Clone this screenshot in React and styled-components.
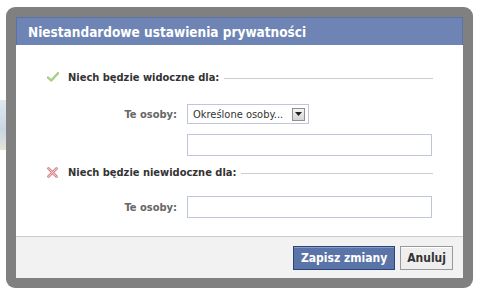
import React from "react";
import styled, { createGlobalStyle } from "styled-components";

const Global = createGlobalStyle`
  html, body { margin: 0; padding: 0; background: #fff; }
  body { font-family: "DejaVu Sans Condensed", "DejaVu Sans", sans-serif; }
  * { box-sizing: border-box; }
`;

const Page = styled.div`
  position: relative;
  width: 480px;
  height: 295px;
  overflow: hidden;
  background: #fff;
  padding: 7px 7px 0 6px;
`;

const LeftStrip = styled.div`
  position: absolute;
  left: 0;
  top: 100px;
  width: 6px;
  height: 50px;
  background: linear-gradient(#dfe8f0, #c9d6e2 60%, #e8e2d8);
`;

const Frame = styled.div`
  width: 467px;
  height: 281px;
  background: #808080;
  border-radius: 9px;
  padding: 10px;
`;

const Dialog = styled.div`
  height: 100%;
  display: flex;
  flex-direction: column;
  background: #fff;
`;

const TitleBar = styled.div`
  height: 28px;
  background: #6d84b4;
  border: 1px solid #5a72a6;
  border-bottom: none;
  color: #fff;
  font-weight: bold;
  font-size: 13.5px;
  display: flex;
  align-items: center;
  padding-left: 11px;
`;

const Body = styled.div`
  flex: 1;
  padding: 25px 30px 0 30px;
  display: flex;
  flex-direction: column;
`;

const SectionHead = styled.div`
  display: flex;
  align-items: center;
  height: 14px;
  margin-top: ${(p) => p.$top || 0}px;
`;

const IconBox = styled.span`
  width: 22px;
  display: flex;
  align-items: center;
  padding-left: 1px;
`;

const HeadLabel = styled.span`
  font-size: 11px;
  font-weight: bold;
  color: #333;
  white-space: nowrap;
  margin-right: 5px;
`;

const Rule = styled.div`
  flex: 1;
  height: 1px;
  background: #ccc;
  margin-top: 2px;
`;

const FieldRow = styled.div`
  display: flex;
  align-items: center;
  margin-top: ${(p) => p.$top || 0}px;
`;

const FieldLabel = styled.span`
  width: 141px;
  text-align: right;
  padding-right: 10px;
  font-size: 11px;
  font-weight: bold;
  color: #666;
`;

const Spacer = styled.span`
  width: 141px;
`;

const Select = styled.div`
  width: 122px;
  height: 20px;
  border: 1px solid #bdc7d8;
  display: flex;
  align-items: center;
  justify-content: space-between;
  padding: 0 3px 0 5px;
  font-size: 11px;
  color: #333;
`;

const Arrow = styled.span`
  width: 13px;
  height: 13px;
  background: linear-gradient(#f4f4f4, #d4d4d4);
  border: 1px solid #8f8f8f;
  display: flex;
  align-items: center;
  justify-content: center;
`;

const Input = styled.div`
  width: 245px;
  height: 22px;
  border: 1px solid #bdc7d8;
  background: #fff;
`;

const Footer = styled.div`
  height: 42px;
  background: #f2f2f2;
  border-top: 1px solid #ccc;
  display: flex;
  align-items: center;
  justify-content: flex-end;
  gap: 5px;
  padding: 1px 10px 0 0;
`;

const Button = styled.div`
  height: 24px;
  display: flex;
  align-items: center;
  padding: 0 ${(p) => (p.$primary ? 7 : 6)}px;
  font-size: 12px;
  font-weight: bold;
  color: ${(p) => (p.$primary ? "#fff" : "#333")};
  background: ${(p) => (p.$primary ? "#5b74a8" : "#eeeeee")};
  border: 1px solid ${(p) => (p.$primary ? "#29447e" : "#999")};
  box-shadow: inset 0 1px 0 ${(p) => (p.$primary ? "#8a9cc2" : "#fff")};
`;

const Check = () => (
  <svg width="12" height="10" viewBox="0 0 12 10">
    <path d="M1 5.5 L4.2 8.5 L11 1.2" fill="none" stroke="#8cc26a" strokeWidth="2.2" strokeLinecap="round" strokeLinejoin="round" />
    <path d="M1 5.5 L4.2 8.5 L11 1.2" fill="none" stroke="#cfe9b8" strokeWidth="0.8" strokeLinecap="round" strokeLinejoin="round" />
  </svg>
);

const Cross = () => (
  <svg width="11" height="11" viewBox="0 0 11 11">
    <path d="M1.5 1.5 L9.5 9.5 M9.5 1.5 L1.5 9.5" fill="none" stroke="#d98b8f" strokeWidth="2.8" strokeLinecap="round" />
    <path d="M1.5 1.5 L9.5 9.5 M9.5 1.5 L1.5 9.5" fill="none" stroke="#f4d2d4" strokeWidth="0.9" strokeLinecap="round" />
  </svg>
);

const DownTri = () => (
  <svg width="7" height="4" viewBox="0 0 7 4">
    <path d="M0 0 H7 L3.5 4 Z" fill="#222" />
  </svg>
);

export default function App() {
  return (
    <>
      <Global />
      <Page>
        <LeftStrip />
        <Frame>
          <Dialog>
            <TitleBar>Niestandardowe ustawienia prywatności</TitleBar>
            <Body>
              <SectionHead>
                <IconBox><Check /></IconBox>
                <HeadLabel>Niech będzie widoczne dla:</HeadLabel>
                <Rule />
              </SectionHead>
              <FieldRow $top={20}>
                <FieldLabel>Te osoby:</FieldLabel>
                <Select>
                  <span>Określone osoby...</span>
                  <Arrow><DownTri /></Arrow>
                </Select>
              </FieldRow>
              <FieldRow $top={10}>
                <Spacer />
                <Input />
              </FieldRow>
              <SectionHead $top={9}>
                <IconBox><Cross /></IconBox>
                <HeadLabel>Niech będzie niewidoczne dla:</HeadLabel>
                <Rule />
              </SectionHead>
              <FieldRow $top={17}>
                <FieldLabel>Te osoby:</FieldLabel>
                <Input />
              </FieldRow>
            </Body>
            <Footer>
              <Button $primary>Zapisz zmiany</Button>
              <Button>Anuluj</Button>
            </Footer>
          </Dialog>
        </Frame>
      </Page>
    </>
  );
}
